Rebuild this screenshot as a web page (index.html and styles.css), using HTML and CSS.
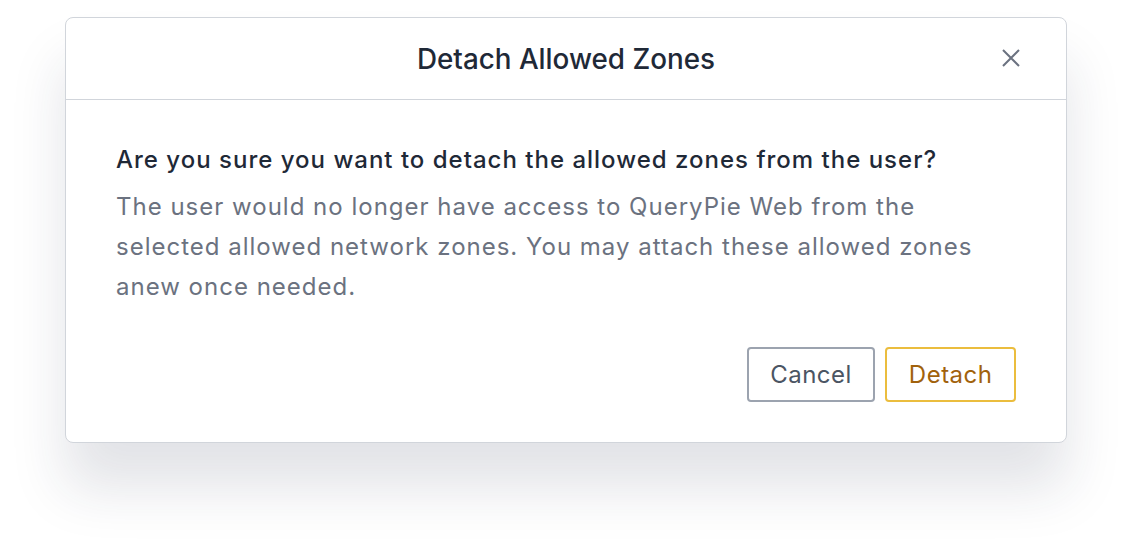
FILE: index.html
```html
<!DOCTYPE html>
<html lang="en">
<head>
    <meta charset="UTF-8">
    <meta name="viewport" content="width=device-width, initial-scale=1.0">
    <title>Detach Allowed Zones</title>
    <link rel="stylesheet" href="styles.css">
</head>
<body>
    <div class="modal">
        <div class="modal-header">
            <h2>Detach Allowed Zones</h2>
            <button class="close" type="button" aria-label="Close">
                <svg width="18" height="18" viewBox="0 0 18 18">
                    <path d="M1 1L17 17M17 1L1 17" stroke="#6b7280" stroke-width="2" fill="none"/>
                </svg>
            </button>
        </div>
        <div class="modal-body">
            <p class="question">Are you sure you want to detach the allowed zones from the user?</p>
            <p class="desc">The user would no longer have access to QueryPie Web from the selected allowed network zones. You may attach these allowed zones anew once needed.</p>
            <div class="actions">
                <button class="btn btn-cancel" type="button">Cancel</button>
                <button class="btn btn-detach" type="button">Detach</button>
            </div>
        </div>
    </div>
</body>
</html>
```

FILE: styles.css
```css
html, body {
    height: 100%;
}
body {
    margin: 0;
    padding: 17px 0 0 65px;
    box-sizing: border-box;
    background: #fff;
    font-family: Inter, "Noto Sans", sans-serif;
}
.modal {
    width: 1002px;
    box-sizing: border-box;
    background: #fff;
    border: 1px solid #d1d5db;
    border-radius: 8px;
    box-shadow: 0 45px 55px rgba(31, 41, 72, 0.13);
}
.modal-header {
    position: relative;
    height: 81px;
    display: flex;
    align-items: center;
    justify-content: center;
    border-bottom: 1px solid #d1d5db;
}
.modal-header h2 {
    margin: 0;
    font-size: 27.8px;
    font-weight: 500;
    color: #1f2937;
}
.close {
    position: absolute;
    right: 46px;
    top: 31px;
    padding: 0;
    border: none;
    background: none;
    width: 18px;
    height: 18px;
    display: flex;
}
.modal-body {
    padding: 44px 50px 40px 50px;
}
.question {
    margin: 0 0 11px;
    font-size: 24px;
    line-height: 32px;
    font-weight: 500;
    letter-spacing: 1px;
    color: #1f2937;
}
.desc {
    margin: 0;
    font-size: 24px;
    line-height: 40px;
    letter-spacing: 1px;
    color: #6b7280;
}
.actions {
    display: flex;
    justify-content: flex-end;
    gap: 10px;
    margin-top: 40px;
}
.btn {
    height: 55px;
    padding: 0 21.5px;
    background: #fff;
    border-radius: 4px;
    font-family: Inter, "Noto Sans", sans-serif;
    font-size: 24px;
    letter-spacing: 0.5px;
}
.btn-cancel {
    border: 2px solid #9ca3af;
    color: #4b5563;
}
.btn-detach {
    border: 2px solid #ebbd3e;
    color: #a1620c;
}
```
